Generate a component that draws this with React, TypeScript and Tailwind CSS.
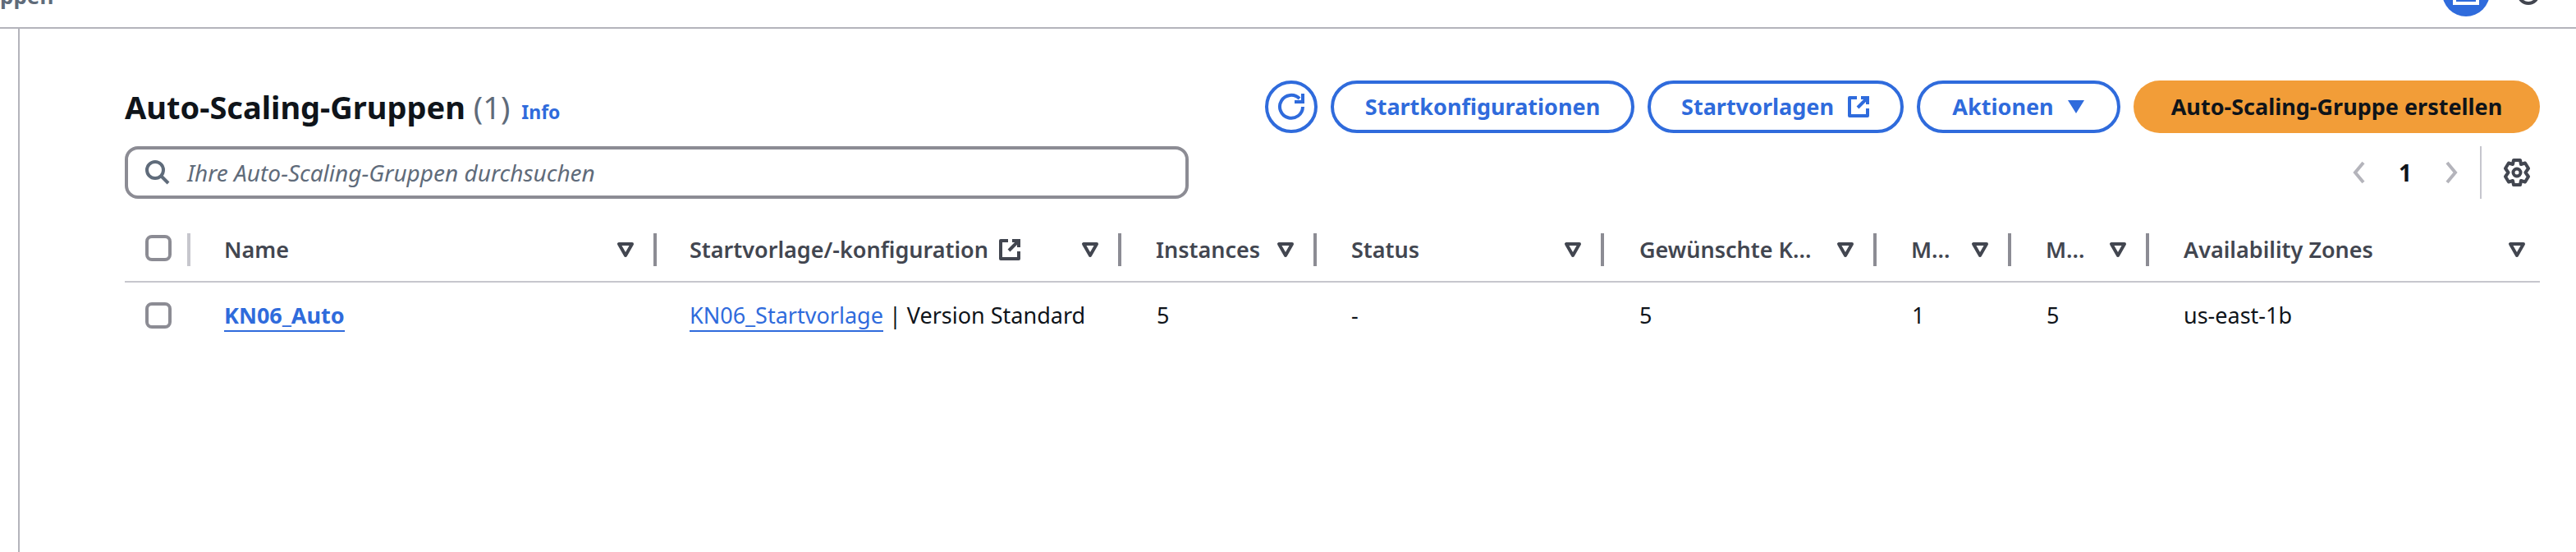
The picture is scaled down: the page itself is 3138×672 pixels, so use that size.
import type { ReactNode } from "react";

const BLUE = "#2f6bdc";

function FilterIcon() {
  return (
    <svg width="22" height="20" viewBox="0 0 22 20" className="shrink-0">
      <path d="M3 3h16l-8 14z" fill="none" stroke="#424650" strokeWidth="4" strokeLinejoin="round" />
    </svg>
  );
}

function ExternalIcon({ color, size }: { color: string; size: number }) {
  return (
    <svg width={size} height={size} viewBox="0 0 28 28" className="shrink-0" fill="none" stroke={color} strokeWidth="4">
      <path d="M12 3H3v22h22v-9" strokeLinejoin="round" />
      <path d="M17 3h8v8M25 3L13 15" />
    </svg>
  );
}

function Checkbox() {
  return <div className="h-[32px] w-[32px] rounded-[8px] border-[4px] border-[#8c8c94] bg-white" />;
}

function PillButton({ children, width }: { children: ReactNode; width: string }) {
  return (
    <button
      type="button"
      className={`flex h-[64px] items-center justify-center gap-[16px] rounded-full border-[4px] border-[#2f6bdc] bg-white text-[27px] font-bold text-[#2f6bdc] ${width}`}
    >
      {children}
    </button>
  );
}

function HeaderCell({ label, icon, pad }: { label: string; icon?: ReactNode; pad: string }) {
  return (
    <div className={`relative flex h-[40px] items-center justify-between pr-[27px] ${pad}`}>
      <div className="flex items-center gap-[12px] overflow-hidden whitespace-nowrap text-[27px] font-semibold text-[#424650]">
        {label}
        {icon}
      </div>
      <FilterIcon />
      <div className="absolute right-0 top-0 h-[40px] w-[4px] bg-[#8c8c94]" />
    </div>
  );
}

const columns = [
  { label: "Name", pad: "pl-[41px]" },
  { label: "Startvorlage/-konfiguration", pad: "pl-[40px]", icon: <ExternalIcon color="#424650" size={28} /> },
  { label: "Instances", pad: "pl-[42px]" },
  { label: "Status", pad: "pl-[42px]" },
  { label: "Gewünschte K...", pad: "pl-[43px]" },
  { label: "M...", pad: "pl-[42px]" },
  { label: "M...", pad: "pl-[42px]" },
];

const gridCols = "grid grid-cols-[80px_568px_566px_238px_350px_332px_164px_168px_476px]";

export default function App() {
  return (
    <div className="h-[672px] w-[3138px] overflow-hidden bg-white font-['Noto_Sans',sans-serif] text-[#0f141a]">
      {/* clipped console top bar */}
      <div className="flex h-[35px] items-end justify-between overflow-hidden border-b-[2px] border-[#b4b4bb]">
        <div className="mb-[24px] text-[26px] font-bold leading-[28px] text-[#5f6b7a]">ppen</div>
        <div className="mb-[13px] flex items-end gap-[33px] pr-[44px]">
          <div className="flex h-[58px] w-[58px] items-start justify-center rounded-full bg-[#2f6bdc] pt-[24px]">
            <div className="h-[20px] w-[32px] border-[4px] border-white" />
          </div>
          <div className="mb-[14px] h-[28px] w-[28px] rounded-full border-[4px] border-[#424650]" />
        </div>
      </div>

      <div className="ml-[22px] h-[637px] border-l-[2px] border-[#b4b4bb] pl-[128px] pr-[44px] pt-[63px]">
        {/* title + actions */}
        <div className="flex h-[64px] items-center justify-between">
          <div className="flex items-baseline gap-[14px]">
            <h1 className="text-[38px] font-bold leading-[64px]">
              Auto-Scaling-Gruppen <span className="font-normal text-[#5f6b7a]">(1)</span>
            </h1>
            <span className="text-[23px] font-bold text-[#2f6bdc]">Info</span>
          </div>
          <div className="flex items-center gap-[16px]">
            <button
              type="button"
              className="flex h-[64px] w-[64px] items-center justify-center rounded-full border-[4px] border-[#2f6bdc] bg-white"
            >
              <svg width="34" height="34" viewBox="0 0 34 34" fill="none" stroke={BLUE} strokeWidth="4">
                <path d="M27 7A14 14 0 1 0 31 17" />
                <path d="M31 1v10H21" />
              </svg>
            </button>
            <PillButton width="w-[370px]">Startkonfigurationen</PillButton>
            <PillButton width="w-[312px]">
              Startvorlagen
              <ExternalIcon color={BLUE} size={28} />
            </PillButton>
            <PillButton width="w-[248px]">
              Aktionen
              <svg width="22" height="18" viewBox="0 0 22 18">
                <path d="M1 1h20L11 17z" fill={BLUE} />
              </svg>
            </PillButton>
            <button
              type="button"
              className="h-[64px] w-[495px] rounded-full bg-[#f29d38] text-[27px] font-bold text-[#0f141a]"
            >
              Auto-Scaling-Gruppe erstellen
            </button>
          </div>
        </div>

        {/* search + pagination */}
        <div className="mt-[16px] flex h-[64px] items-center justify-between">
          <div className="flex h-[64px] w-[1296px] items-center gap-[20px] rounded-[16px] border-[4px] border-[#8c8c94] pl-[20px]">
            <svg width="32" height="32" viewBox="0 0 32 32" fill="none" stroke="#5f6b7a" strokeWidth="4">
              <circle cx="13" cy="13" r="10" />
              <path d="M20 20l9 9" />
            </svg>
            <span className="text-[28px] italic text-[#5f6b7a]">Ihre Auto-Scaling-Gruppen durchsuchen</span>
          </div>
          <div className="mr-[12px] flex h-[64px] items-center">
            <svg width="20" height="28" viewBox="0 0 20 28" fill="none" stroke="#b4b4bb" strokeWidth="4">
              <path d="M15 2L5 14l10 12" />
            </svg>
            <span className="w-[92px] text-center text-[28px] font-bold">1</span>
            <svg width="20" height="28" viewBox="0 0 20 28" fill="none" stroke="#b4b4bb" strokeWidth="4">
              <path d="M5 2l10 12L5 26" />
            </svg>
            <div className="ml-[25px] h-[64px] w-[2px] bg-[#c6c6cd]" />
            <svg width="32" height="34" viewBox="0 0 32 34" fill="none" stroke="#424650" strokeWidth="4" className="ml-[27px]" strokeLinejoin="round">
              <circle cx="16" cy="17" r="4.5" />
              <path d="M12 2h8l1 5 5-1.500 4 6.500-3.500 5 3.500 5-4 6.500-5-1.500-1 5h-8l-1-5-5 1.500-4-6.500 3.500-5L2 12l4-6.500L11 7z" />
            </svg>
          </div>
        </div>

        {/* table */}
        <div className={`${gridCols} mt-[42px] h-[60px] border-b-[2px] border-[#c6c6cd]`}>
          <div className="relative flex h-[40px] items-center pl-[25px]">
            <div className="-mt-[4px]">
              <Checkbox />
            </div>
            <div className="absolute right-0 top-0 h-[40px] w-[4px] bg-[#c6c6cd]" />
          </div>
          {columns.map((col, i) => (
            <HeaderCell key={i} label={col.label} icon={col.icon} pad={col.pad} />
          ))}
          <div className="flex h-[40px] items-center justify-between pl-[42px] pr-[17px] text-[27px] font-semibold text-[#424650]">
            Availability Zones
            <FilterIcon />
          </div>
        </div>
        <div className={`${gridCols} h-[80px] items-center text-[27px]`}>
          <div className="pl-[25px]">
            <Checkbox />
          </div>
          <div className="pl-[41px]">
            <a className="border-b-[2px] border-[#2f6bdc] font-bold text-[#2f6bdc]">KN06_Auto</a>
          </div>
          <div className="whitespace-nowrap pl-[40px]">
            <a className="border-b-[2px] border-[#2f6bdc] text-[#2f6bdc]">KN06_Startvorlage</a> | Version Standard
          </div>
          <div className="pl-[43px]">5</div>
          <div className="pl-[42px]">-</div>
          <div className="pl-[43px]">5</div>
          <div className="pl-[43px]">1</div>
          <div className="pl-[43px]">5</div>
          <div className="pl-[42px]">us-east-1b</div>
        </div>
      </div>
    </div>
  );
}
